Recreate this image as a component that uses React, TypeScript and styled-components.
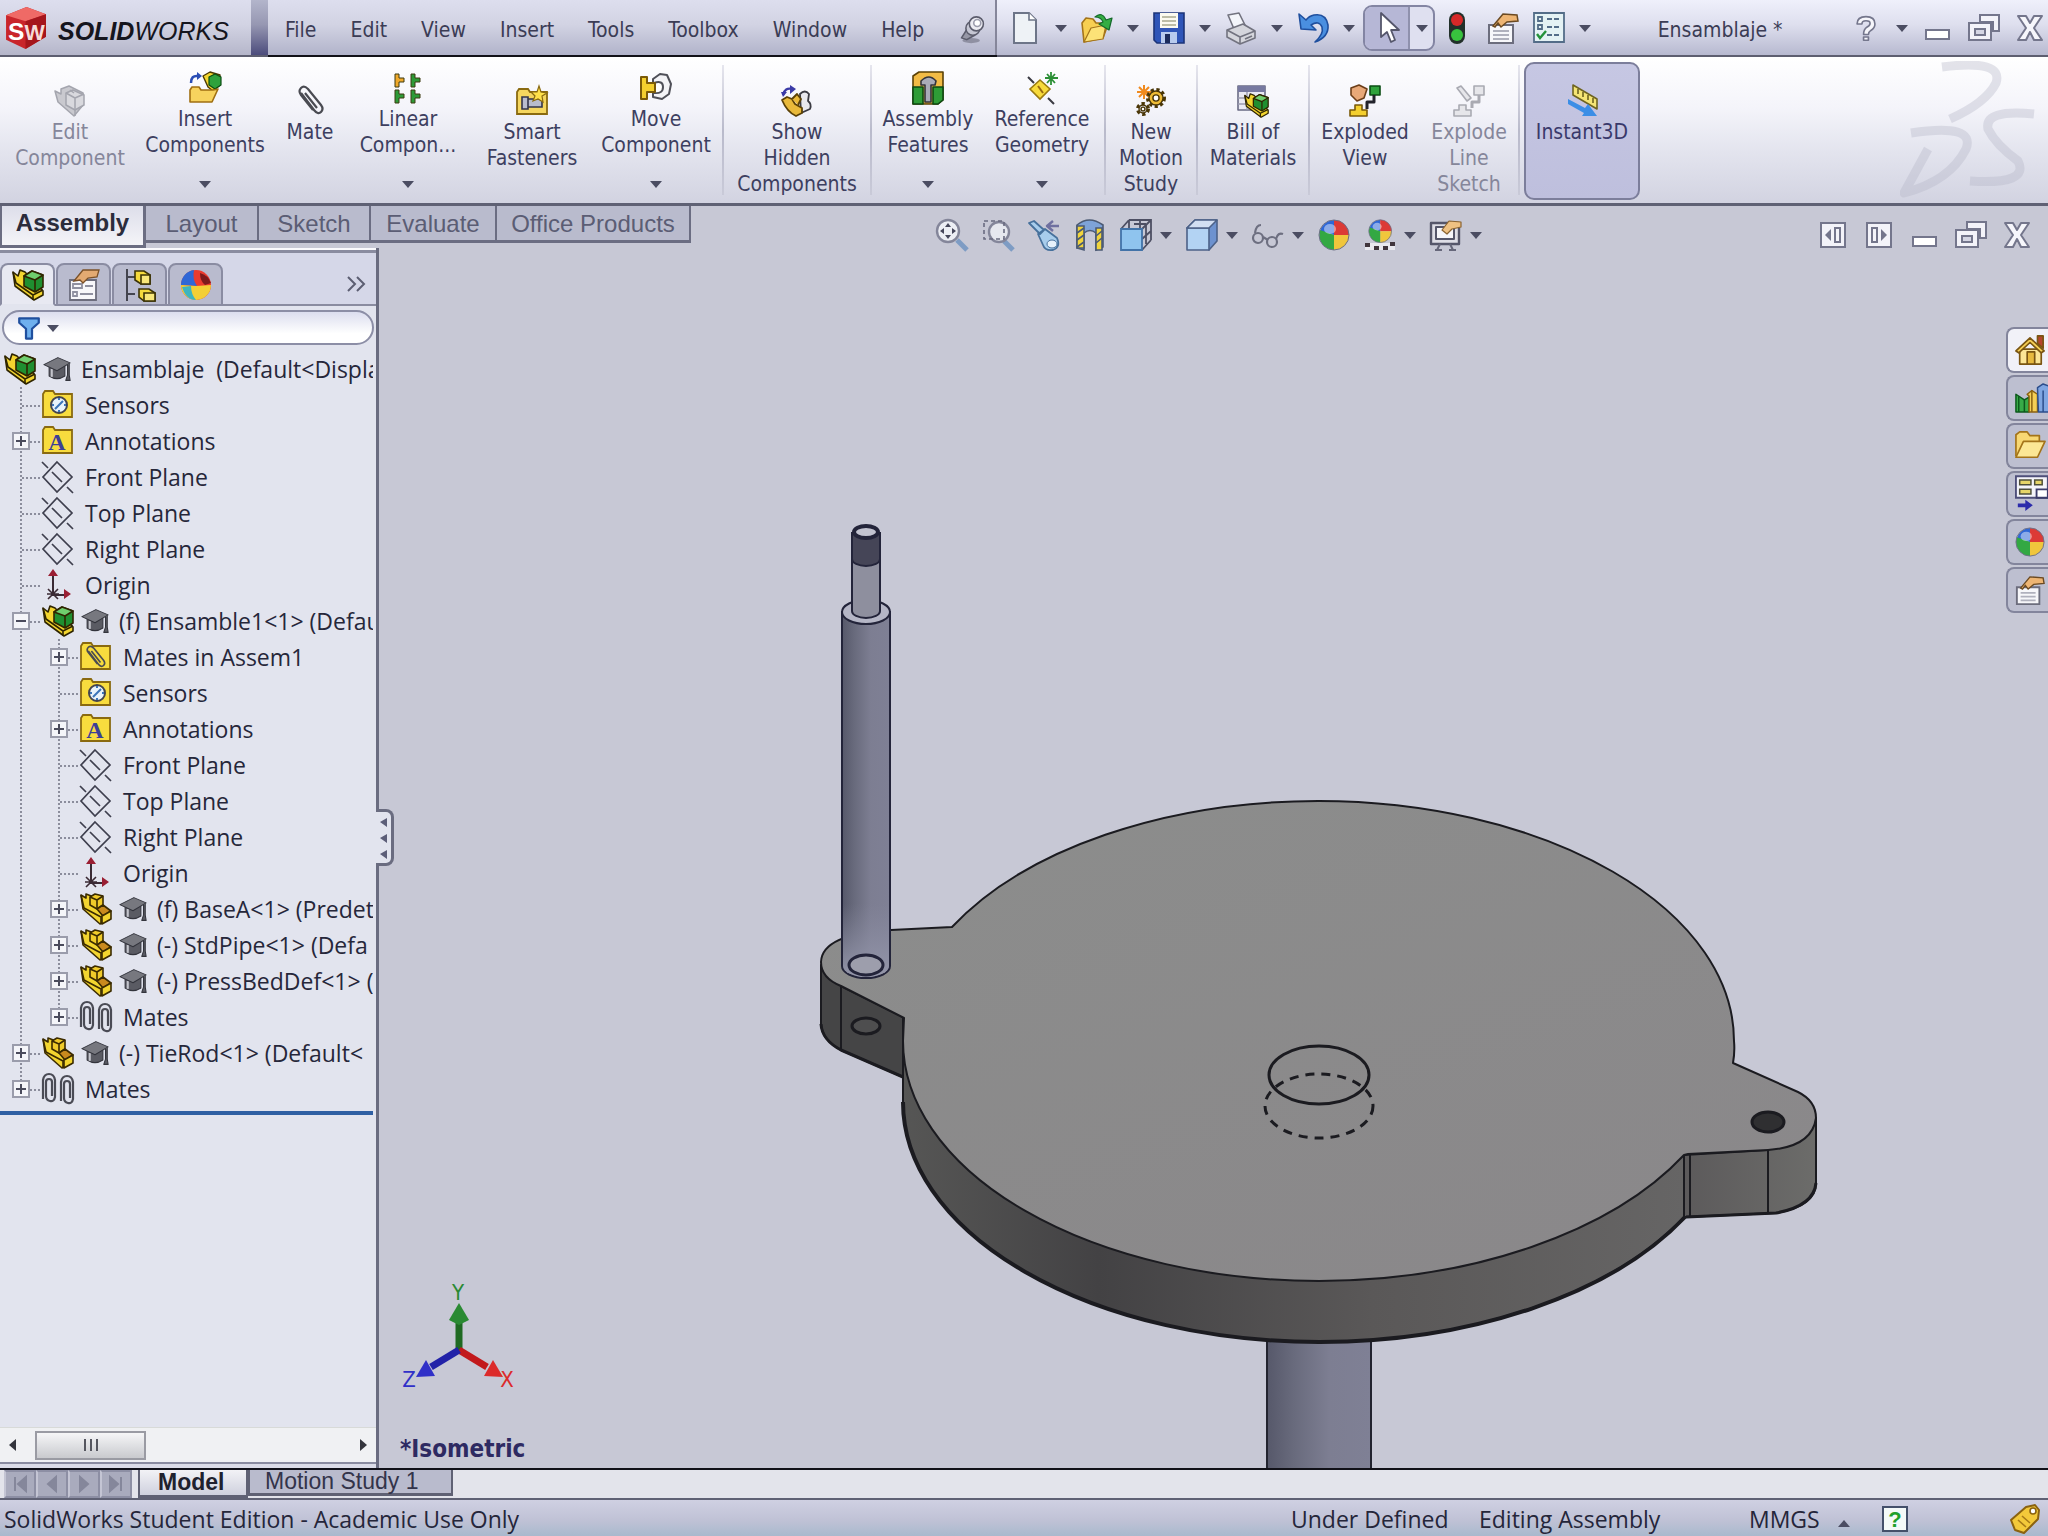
import React from "react";
import styled, { createGlobalStyle, css } from "styled-components";

const UI_FONT = '"DejaVu Sans Condensed", "DejaVu Sans", sans-serif';
const TREE_FONT = '"Open Sans", "Noto Sans", sans-serif';
const TAB_FONT = '"Liberation Sans", Arial, sans-serif';

const GlobalStyle = createGlobalStyle`
  * { box-sizing: border-box; }
  body { margin: 0; background: #c7c8d5; }
  button, input { font: inherit; color: inherit; }
`;

/* ---------- shell ---------- */

const Shell = styled.div`
  display: flex;
  flex-direction: column;
  height: 100vh;
  overflow: hidden;
  background: #c7c8d5;
  color: #3b3c55;
  font-family: ${UI_FONT};
  font-size: 21px;
`;

const plain = css`
  display: flex;
  align-items: center;
  padding: 0;
  border: 0;
  background: none;
`;

const IconButton = styled.button`
  ${plain}
  justify-content: center;
  width: 33px;
  height: 33px;
  flex: none;
`;

const Caret = styled.svg`
  width: 12px;
  height: 8px;
  flex: none;
  fill: #4b4d62;
`;

const Art = styled.svg<{ $size?: number }>`
  width: ${(p) => p.$size ?? 32}px;
  height: ${(p) => p.$size ?? 32}px;
  flex: none;
  display: block;
  overflow: visible;
`;

const HandleArt = styled.svg`
  width: 14px;
  height: 51px;
  display: block;
`;

const Down = () => (
  <Caret viewBox="0 0 12 8" aria-hidden="true">
    <path d="M0 1h12L6 8z" />
  </Caret>
);

/* ---------- title bar ---------- */

const TitleBar = styled.header`
  display: flex;
  flex: none;
  height: 57px;
  border-bottom: 2px solid #5d5e70;
  background: linear-gradient(#eff0fb, #dedfee 45%, #b7b9d0);
`;

const Brand = styled.div`
  display: flex;
  align-items: center;
  gap: 11px;
  width: 251px;
  padding-left: 4px;
  background: linear-gradient(#dddeee, #d2d3e3 45%, #b5b6ca);
`;

const BrandName = styled.span`
  padding-top: 6px;
  color: #15151d;
  font: italic 400 25px/30px ${TAB_FONT};
  b { font-weight: 700; }
`;

const BrandEdge = styled.div`
  width: 17px;
  background: linear-gradient(#b3b5cb, #9697b2 45%, #4c4c7c);
`;

const MenuBar = styled.nav`
  display: flex;
  align-items: center;
  gap: 34px;
  padding: 4px 9px 0 17px;
  border-right: 2px solid #85869a;
  background: linear-gradient(#dddeee, #d2d3e3 45%, #b1b3ca);
  box-shadow: 0 2px 0 #111118;
`;

const MenuItem = styled.button`
  ${plain}
  line-height: 26px;
`;

const QuickBar = styled.div`
  display: flex;
  flex: 1;
  align-items: center;
  gap: 13px;
  padding: 0 2px 0 11px;
`;

const Split = styled.div`
  display: flex;
  align-items: center;
  gap: 14px;
`;

const CaretButton = styled.button`
  ${plain}
  width: 12px;
  height: 24px;
`;

const SelectTool = styled.div`
  display: flex;
  width: 72px;
  height: 46px;
  margin-left: -5px;
  margin-right: -8px;
  border: 2px solid #8385a3;
  border-radius: 9px;
  overflow: hidden;
  background: #dfe0f0;
`;

const SelectMain = styled.button`
  ${plain}
  justify-content: center;
  width: 45px;
  border-right: 2px solid #8f91ad;
  background: #b6b7d6;
`;

const SelectMore = styled.button`
  ${plain}
  justify-content: center;
  flex: 1;
`;

const DocName = styled.span`
  flex: 1;
  text-align: center;
  line-height: 26px;
  padding-top: 4px;
`;

/* ---------- ribbon ---------- */

const Ribbon = styled.section`
  display: flex;
  flex: none;
  height: 149px;
  border-bottom: 3px solid #5f6174;
  background: linear-gradient(#ffffff, #f4f4fa 35%, #e3e4ee 65%, #d2d3e1);
`;

const Command = styled.button<{ $w: number; $drop?: boolean; $off?: boolean; $on?: boolean }>`
  display: flex;
  flex-direction: column;
  align-items: center;
  flex: none;
  width: ${(p) => p.$w}px;
  padding: ${(p) => (p.$on ? "21px 0 0" : p.$drop ? "15px 0 0" : "28px 0 0")};
  margin: ${(p) => (p.$on ? "5px 0 3px 4px" : "0")};
  border: ${(p) => (p.$on ? "2px solid #7c7e9b" : "0")};
  border-radius: ${(p) => (p.$on ? "10px" : "0")};
  background: ${(p) => (p.$on ? "linear-gradient(#c6c7e3, #bebfdd)" : "none")};
  color: ${(p) => (p.$off ? "#85869a" : p.$on ? "#39396b" : "#3d3f60")};
  line-height: 26px;
  white-space: pre-line;
`;

const CommandText = styled.span`
  margin-top: 2px;
  line-height: 26px;
`;

const CommandCaret = styled.span`
  display: flex;
  margin-top: 22px;
`;

const Divider = styled.div<{ $gap?: number }>`
  flex: none;
  width: 2px;
  margin: 8px 0 8px ${(p) => p.$gap ?? 0}px;
  background: linear-gradient(#e6e6ee, #b9bacb 50%, #c9cad8);
`;

const Watermark = styled.svg`
  width: 140px;
  height: 140px;
  margin: 4px 8px 0 auto;
  fill: none;
  stroke: #b4b5c6;
  stroke-width: 9;
  stroke-linejoin: round;
  opacity: 0.36;
`;

/* ---------- command tabs / view toolbar ---------- */

const ToolRow = styled.div`
  display: flex;
  align-items: flex-start;
  flex: none;
  height: 42px;
`;

const TabStrip = styled.div`
  display: flex;
  align-items: flex-start;
  width: 691px;
  font-family: ${TAB_FONT};
  font-size: 24px;
`;

const CommandTab = styled.button<{ $w: number; $active?: boolean }>`
  flex: none;
  width: ${(p) => p.$w}px;
  height: ${(p) => (p.$active ? 42 : 37)}px;
  padding: ${(p) => (p.$active ? "0 0 5px" : "2px 0 0")};
  border: solid #6b6d82;
  border-width: ${(p) => (p.$active ? "0 3px 3px 2px" : "0 2px 3px 0")};
  background: ${(p) => (p.$active ? "linear-gradient(#dddeea, #f4f4f8)" : "#b9bbcd")};
  color: ${(p) => (p.$active ? "#2b2c3c" : "#5b5d74")};
  font-weight: ${(p) => (p.$active ? 700 : 400)};
  line-height: 32px;
`;

const ViewTools = styled.div`
  display: flex;
  gap: 13px;
  margin: 12px auto 0 244px;
`;

const ViewTool = styled.div`
  display: flex;
  align-items: center;
  gap: 8px;
`;

const DocControls = styled.div`
  display: flex;
  gap: 13px;
  margin: 12px 15px 0 0;
`;

/* ---------- body ---------- */

const Body = styled.main`
  display: flex;
  flex: 1;
  min-height: 0;
`;

const Panel = styled.aside`
  display: flex;
  flex-direction: column;
  flex: none;
  width: 379px;
  border-right: 3px solid #6a6c80;
  background: #e2e4ee;
  font-family: ${TREE_FONT};
`;

const PanelTabs = styled.div`
  display: flex;
  align-items: flex-end;
  flex: none;
  height: 58px;
  padding: 0 10px 0 0;
  border-top: 2px solid #fafafd;
  box-shadow: inset 0 3px 0 #8a8ca0, inset 0 -2px 0 #8a8ca0;
  background: #d5d7e8;
`;

const PanelTab = styled.button<{ $active?: boolean }>`
  ${plain}
  justify-content: center;
  width: 55px;
  height: 43px;
  margin-right: 1px;
  border: 2px solid #8a8ca2;
  border-bottom-color: ${(p) => (p.$active ? "#e2e4ee" : "#8a8ca2")};
  border-radius: 8px 8px 0 0;
  background: ${(p) => (p.$active ? "#e8e9f2" : "#b9bbce")};
`;

const MoreButton = styled.button`
  ${plain}
  margin: 0 0 12px auto;
`;

const FilterBox = styled.div`
  display: flex;
  align-items: center;
  gap: 6px;
  flex: none;
  height: 35px;
  margin: 4px 2px 6px 2px;
  padding-left: 13px;
  border: 2px solid #8c8ea6;
  border-radius: 18px;
  background: linear-gradient(#dcdeef, #ffffff 70%);
`;

const FilterInput = styled.input`
  flex: 1;
  min-width: 0;
  border: 0;
  outline: 0;
  background: none;
`;

const Tree = styled.ul`
  flex: none;
  width: 373px;
  margin: 0;
  padding: 0 0 4px;
  overflow: hidden;
  list-style: none;
  border-bottom: 4px solid #2f5fa3;
  color: #26273a;
  font-size: 23px;
  line-height: 36px;
`;

const TreeRow = styled.li<{ $root?: boolean }>`
  display: flex;
  align-items: center;
  height: 36px;
  padding-left: ${(p) => (p.$root ? 4 : 0)}px;
  white-space: pre;
`;

const dotsV = "repeating-linear-gradient(#8b8d9c 0 2px, transparent 2px 4px)";
const dotsH = "repeating-linear-gradient(90deg, #8b8d9c 0 2px, transparent 2px 4px)";

const Guide = styled.span<{ $leaf?: boolean; $end?: boolean }>`
  display: flex;
  align-items: center;
  flex: none;
  width: ${(p) => (p.$leaf ? 42 : 38)}px;
  height: 36px;
  padding-left: 12px;
  background-image: ${(p) => (p.$leaf ? `${dotsV}, ${dotsH}` : dotsV)};
  background-repeat: no-repeat;
  background-position: 20px 0, 22px 18px;
  background-size: 2px ${(p) => (p.$end ? "50%" : "100%")}, 20px 2px;
`;

const Expander = styled.button`
  ${plain}
  width: 18px;
  height: 18px;
`;

const CapSlot = styled.span`
  display: flex;
  margin-left: 7px;
`;

const TreeLabel = styled.span<{ $cap?: boolean }>`
  margin-left: ${(p) => (p.$cap ? 10 : 11)}px;
  flex: none;
`;

const HScroll = styled.div`
  display: flex;
  align-items: center;
  flex: none;
  height: 35px;
  margin-top: auto;
  padding: 0 6px;
  border-top: 1px solid #d8dad8;
  background: #f0f1f3;
`;

const ScrollTrack = styled.div`
  flex: 1;
  padding-left: 17px;
`;

const ScrollThumb = styled.div`
  display: flex;
  align-items: center;
  justify-content: center;
  gap: 4px;
  width: 111px;
  height: 29px;
  border: 2px solid #9a9ba3;
  background: linear-gradient(#f6f6f7, #dfe0e3 50%, #c9cace);
  i { width: 2px; height: 12px; background: #55565f; }
`;

const PanelFoot = styled.div`
  flex: none;
  height: 6px;
  border-top: 2px solid #8a8ca0;
  background: #dcdde8;
`;

const Viewport = styled.section`
  position: relative;
  flex: 1;
  min-width: 0;
`;

const Scene = styled.svg`
  display: block;
  width: 100%;
  height: 100%;
`;

const SplitHandle = styled.button`
  position: absolute;
  left: -3px;
  top: calc(50% - 49px);
  width: 18px;
  height: 57px;
  padding: 0;
  border: 3px solid #6a6c80;
  border-left: 0;
  border-radius: 0 8px 8px 0;
  background: #e2e4ee;
`;

const TaskPane = styled.div`
  position: absolute;
  right: 0;
  top: 79px;
  display: flex;
  flex-direction: column;
  gap: 2px;
`;

const TaskTab = styled.button<{ $active?: boolean }>`
  ${plain}
  justify-content: flex-start;
  width: 42px;
  height: 46px;
  padding-left: 7px;
  overflow: hidden;
  border: 2px solid #83859c;
  border-right: 0;
  border-radius: 8px 0 0 8px;
  background: ${(p) => (p.$active ? "#f1f1f8" : "#bdbfd0")};
`;

/* ---------- bottom ---------- */

const SheetBar = styled.nav`
  display: flex;
  align-items: flex-start;
  flex: none;
  height: 32px;
  border-top: 2px solid #111118;
  border-bottom: 2px solid #5f6174;
  background: #e3e4eb;
  font-family: ${TAB_FONT};
  font-size: 23px;
`;

const SheetNav = styled.div`
  display: flex;
  width: 138px;
  padding-left: 4px;
`;

const NavButton = styled.button`
  ${plain}
  justify-content: center;
  width: 32px;
  height: 28px;
  border: 2px solid #8d8fa4;
  border-left-color: #c4c5d4;
  background: #a9abbd;
`;

const Sheet = styled.button<{ $w: number; $active?: boolean }>`
  width: ${(p) => p.$w}px;
  height: ${(p) => (p.$active ? 28 : 26)}px;
  padding: 0 0 0 ${(p) => (p.$active ? 18 : 15)}px;
  border: solid #5f6174;
  border-width: 0 2px 3px;
  background: ${(p) => (p.$active ? "linear-gradient(#f2f2f6, #cfd1de)" : "#b9bbcd")};
  color: ${(p) => (p.$active ? "#20212e" : "#33344a")};
  font-weight: ${(p) => (p.$active ? 700 : 400)};
  line-height: 23px;
  text-align: left;
`;

const StatusBar = styled.footer`
  display: flex;
  align-items: center;
  flex: none;
  height: 36px;
  padding: 2px 8px 0 4px;
  background: linear-gradient(#cfd0e2, #c0c2d6 55%, #a9b9cd);
  color: #25263a;
  font-family: ${TREE_FONT};
  font-size: 23px;
  line-height: 28px;
`;

const StatusCell = styled.span<{ $w?: number; $grow?: boolean }>`
  flex: ${(p) => (p.$grow ? "1" : "none")};
  width: ${(p) => (p.$w ? `${p.$w}px` : "auto")};
  white-space: nowrap;
`;

/* ---------- icon drawings ---------- */

const Ball = () => (
  <g>
    <path d="M16 16V1A15 15 0 0 0 2 12z" fill="#2f67d6" />
    <path d="M16 16V1a15 15 0 0 1 15 15z" fill="#dc3a35" />
    <path d="M16 16h15a15 15 0 0 1-15 15z" fill="#f0c63c" />
    <path d="M16 16v15A15 15 0 0 1 2 11z" fill="#33a843" />
    <ellipse cx="12" cy="10" rx="6" ry="5" fill="#fff" opacity=".45" />
    <circle cx="16" cy="16" r="15" fill="none" stroke="#6c6f86" strokeWidth="1" />
  </g>
);
const Sheetlet = () => (
  <g>
    <path d="M2 13h24v18H2z" fill="#f7f7fa" stroke="#6c6d7d" strokeWidth="2" />
    <path d="M6 19h16M6 23h16M6 27h16" stroke="#b0b1bd" strokeWidth="2" />
    <path d="M6 14L16 2l14 1 1 6-11 1-6 5-3-4-3 4z" fill="#eeb573" stroke="#6b4a22" strokeWidth="1.5" />
  </g>
);
const Clip = () => (
  <path d="M7 8l13 17q4 5 7 2t0-7L14 4Q10 0 7 3t0 7l12 15M11 8l12 15" fill="none" stroke="#4a4b52" strokeWidth="2.2" />
);
const PartShape = () => (
  <g stroke="#3b2b00" strokeWidth="1.6" strokeLinejoin="round">
    <path d="M1 2l5 3V1l8 3 16 16v6l-10 5L3 16z" fill="#f3d52f" />
    <path d="M1 2l3 13 17 9 9-4M21 24v7" fill="none" />
    <path d="M10 4l5-3 8 2v9l-6 4-7-4z" fill="#f0cb2a" />
    <path d="M10 4l7 3 6-4M17 7v9" fill="none" />
    <path d="M17 16l6-4 8 6-8 5z" fill="#c98a1e" />
    <path d="M22 23l9-5v8l-9 5z" fill="#f3d52f" />
  </g>
);
const AsmShape = () => (
  <g stroke="#2f2500" strokeWidth="1.6" strokeLinejoin="round">
    <path d="M1 3l5 4 2-6 5 2 18 19v4l-9 5L3 17z" fill="#f3d52f" />
    <path d="M1 3l3 11 17 12 10-5M21 26v5" fill="none" />
    <path d="M12 7l8-5 11 4v12l-8 5-11-6z" fill="#1f8f30" />
    <path d="M12 7l8-5 11 4-8 5z" fill="#6fce6d" />
    <path d="M23 11v12" fill="none" />
  </g>
);
const FolderShape = () => (
  <path d="M1 5l2-3h8l2 3h17v23H1z" fill="#f8dc3e" stroke="#8a6a10" strokeWidth="1.8" />
);
const GearShape = ({ x, y, r, fill }: { x: number; y: number; r: number; fill: string }) => (
  <g>
    <circle cx={x} cy={y} r={r} fill="none" stroke="#4a3607" strokeWidth="4" strokeDasharray="3 2.4" />
    <circle cx={x} cy={y} r={r - 1} fill={fill} stroke="#4a3607" strokeWidth="1.4" />
    <circle cx={x} cy={y} r={r / 2.6} fill="#fff" stroke="#4a3607" strokeWidth="1.4" />
  </g>
);
const Tee = ({ x, y, c }: { x: number; y: number; c: string }) => (
  <path transform={`translate(${x} ${y})`} d="M0 0h4v4h5v4H4v5H0z" fill={c} stroke="#3c3a10" strokeWidth="1" />
);

const icons: Record<string, React.ReactNode> = {
  editComponent: (
    <g fill="#c9c9cf" stroke="#a4a5ae" strokeWidth="1.5" strokeLinejoin="round">
      <path d="M1 6l6 3 0-5 8-3 14 7v12l-9 11L4 17z" />
      <path d="M12 8l7-3 11 5v10l-9 5-9-5z" fill="#d9d9de" />
      <path d="M12 8l9 5 9-4M21 13v18M16 5l4 3" fill="none" />
    </g>
  ),
  insert: (
    <g strokeLinejoin="round">
      <path d="M2 11Q2 3 9 4" fill="none" stroke="#2a4db5" strokeWidth="2.5" /><path d="M8 0l5 4-5 4z" fill="#2a4db5" />
      <path d="M14 4l7-4 10 3v10l-7 6-5-4z" fill="#f3d52f" stroke="#4a3900" strokeWidth="1.4" />
      <path d="M20 5l6-3 6 3v8l-6 4-6-4z" fill="#2fa23c" stroke="#0b4d13" strokeWidth="1.2" />
      <path d="M1 18l2-3h7l2 3h12l5-1-6 13H1z" fill="#f7d35e" stroke="#a06f12" strokeWidth="1.6" />
    </g>
  ),
  clip: <Clip />,
  linear: <g><Tee x={3} y={2} c="#f0a92a" /><Tee x={19} y={2} c="#2d9a37" /><Tee x={3} y={18} c="#2d9a37" /><Tee x={19} y={18} c="#2d9a37" /></g>,
  smart: (
    <g>
      <path d="M1 7l2-3h9l2 3h17v22H1z" fill="#f5d65f" stroke="#8a6a10" strokeWidth="1.8" />
      <path d="M6 12h6v12H6zM12 14h14v8H12z" fill="#b9bccd" stroke="#33344a" strokeWidth="1.6" />
      <path d="M23 1l2 6 6 1-5 3 1 6-5-3-5 2 2-5-4-4h6z" fill="#ffe14a" stroke="#8a6a10" strokeWidth="1.2" />
    </g>
  ),
  move: (
    <g strokeWidth="2" strokeLinejoin="round">
      <path d="M13 7l7-5 7 1 4 9-2 10-7 5-9-2z" fill="#f3f3f6" stroke="#4f5058" />
      <path d="M14 11q9-3 9 4t-9 6" fill="#fff" stroke="#4f5058" />
      <path d="M1 5h6v6h8v9H7v7H1z" fill="#f4cf2e" stroke="#7a5a08" />
    </g>
  ),
  showHidden: (
    <g strokeWidth="1.8" strokeLinejoin="round">
      <path d="M2 10q2-8 9-6" fill="none" stroke="#3a3aa6" strokeWidth="2.4" /><path d="M9 0l6 4-6 5zM0 7h6l-4 5z" fill="#3a3aa6" />
      <path d="M19 9q5-5 9 0l-1 7q4 3 2 8l-9 4z" fill="#e8e8ee" stroke="#3a3a42" />
      <path d="M1 15l5-3 5 2 3 5 7 4v5l-6 3q-9-4-14-16z" fill="#e9b93a" stroke="#5b4106" />
      <path d="M11 14l5-5 4 5-3 6" fill="#e9b93a" stroke="#5b4106" />
    </g>
  ),
  features: (
    <g strokeWidth="1.6" strokeLinejoin="round">
      <path d="M1 4l6-4h24v28l-5 4H1z" fill="#f2bb45" stroke="#5b4106" />
      <path d="M1 15h10v17H1zM21 15h10v13l-5 4h-5z" fill="#2e9c36" stroke="#0c4a14" />
      <path d="M9 9q8-8 15 0l-1 4h-4v17h-6V13H9z" fill="#a9abb8" stroke="#33343c" />
    </g>
  ),
  refgeo: (
    <g>
      <path d="M2 5l6 6M22 26l6 6" stroke="#3a3a42" strokeWidth="2" />
      <path d="M14 8l10 9-10 10L4 17z" fill="#f8da3a" stroke="#9a7a10" strokeWidth="1.6" /><path d="M12 14l5 7" stroke="#9a6a10" strokeWidth="2" />
      <path d="M25 0v13M19 6h13M21 2l8 9M29 2l-8 9" stroke="#2c8f35" strokeWidth="1.8" />
    </g>
  ),
  motion: (
    <g>
      <path d="M9 0v14M2 7h14M4 2l10 10M14 2L4 12" stroke="#f08a1e" strokeWidth="2" />
      <GearShape x={21} y={13} r={8} fill="#eebb35" /><GearShape x={8} y={24} r={5} fill="#d5d5dc" />
    </g>
  ),
  bom: (
    <g strokeLinejoin="round">
      <path d="M1 1h27v24H1z" fill="#e9e9f2" stroke="#6a6b84" strokeWidth="1.6" /><path d="M1 1h27v6H1z" fill="#7779a0" />
      <path d="M1 13h27M1 19h27M10 7v18" stroke="#9a9bb0" strokeWidth="1.4" />
      <g transform="translate(7 8) scale(.78)"><AsmShape /></g>
    </g>
  ),
  exploded: (
    <g strokeWidth="1.6" strokeLinejoin="round">
      <path d="M2 3l8-3 8 4-3 9-7 3-6-6z" fill="#e8a878" stroke="#6b3d18" />
      <path d="M21 1h10v9H21z" fill="#2fa23c" stroke="#0b4d13" />
      <path d="M25 10v7h-7v7" fill="none" stroke="#22232b" strokeWidth="3" />
      <path d="M6 20h7v5h5v6H1v-6h5z" fill="#f4cf2e" stroke="#7a5a08" />
    </g>
  ),
  explodeLine: (
    <g strokeWidth="1.6" strokeLinejoin="round" fill="#e6e6ea" stroke="#a9aab2">
      <path d="M4 3l4-2 10 12-4 3zM21 1h10v9H21z" /><path d="M26 10v7h-7v6" fill="none" strokeWidth="3" />
      <path d="M6 20h7v5h5v6H1v-6h5z" />
    </g>
  ),
  instant: (
    <g strokeLinejoin="round">
      <path d="M7 0l24 14v10L7 10z" fill="#f5e574" stroke="#6e6420" strokeWidth="1.6" />
      <path d="M12 4v5M17 7v5M22 10v5M27 13v5" stroke="#6e6420" strokeWidth="1.6" />
      <path d="M2 14l17 9 3-4 9 12-15 0 2-3L2 19z" fill="#3b8ee6" />
    </g>
  ),
  pin: (
    <g stroke="#5b5c6c" strokeWidth="1.8" fill="#ececf2" strokeLinejoin="round">
      <ellipse cx="15" cy="28" rx="10" ry="3" fill="#8f90a2" stroke="none" />
      <path d="M4 25l7-11 8 8-9 5z" fill="#9697a6" /><circle cx="17" cy="14" r="8" fill="#c5c6d3" /><circle cx="21" cy="9" r="8" />
      <circle cx="22" cy="8" r="4" fill="#fff" stroke="#9b9cac" />
    </g>
  ),
  newDoc: <g><path d="M5 1h15l7 7v23H5z" fill="#eef2f6" stroke="#6d7588" strokeWidth="2" /><path d="M20 1v7h7" fill="#fff" stroke="#6d7588" strokeWidth="1.6" /></g>,
  open: (
    <g strokeLinejoin="round">
      <path d="M3 30L1 11l4-5 7 1 3 4 9 0 2 4-4 11z" fill="#f7cf52" stroke="#a4741a" strokeWidth="1.6" />
      <path d="M3 30l7-14 15-3-3 14z" fill="#fce277" stroke="#a4741a" strokeWidth="1.2" />
      <path d="M14 5q7-6 11 3l6-2-3 12-10-6 4-2q-2-5-8-5z" fill="#35ad43" stroke="#14692a" strokeWidth="1.2" />
    </g>
  ),
  save: (
    <g>
      <path d="M1 1h30v30H4l-3-3z" fill="#2f55b8" stroke="#1c3478" strokeWidth="1.6" /><path d="M7 1h18v15H7z" fill="#fbfaf0" />
      <path d="M9 5h14M9 9h14M9 13h14" stroke="#a9a98f" strokeWidth="1.6" /><path d="M8 20h16v11H8z" fill="#b8cbee" /><path d="M12 22h5v9h-5z" fill="#1c2c5c" />
    </g>
  ),
  print: (
    <g stroke="#72737f" strokeWidth="1.6" strokeLinejoin="round">
      <path d="M3 3l11-2 6 12-11 4z" fill="#f3f5fa" /><path d="M2 18l16-6 12 7v7l-15 6-13-7z" fill="#d5d6dc" />
      <path d="M2 18l13 7 15-6M15 25v7M20 27l7-3" fill="none" />
    </g>
  ),
  undo: <path d="M2 2l2 15 15 1-5-5q8-5 11 2 2 7-7 15 14-5 13-17Q29 1 17 3q-5 1-8 5z" fill="#4a8fe0" stroke="#1f4f9e" strokeWidth="1.6" strokeLinejoin="round" />,
  arrow: <path d="M10 1v24l6-5 4 10 4-2-4-10h8z" fill="#fff" stroke="#55566b" strokeWidth="1.8" strokeLinejoin="round" />,
  traffic: (
    <g>
      <rect x="8" y="0" width="16" height="32" rx="8" fill="#22302a" />
      <circle cx="16" cy="8" r="6" fill="#d62828" /><circle cx="16" cy="23" r="6" fill="#38c23e" />
    </g>
  ),
  sheet: <Sheetlet />,
  options: (
    <g stroke="#536d88" strokeWidth="1.8" fill="none">
      <path d="M1 1h30v29H1z" fill="#e4f2f4" /><path d="M14 7h13M14 15h13M14 23h13" strokeDasharray="5 2" />
      <path d="M5 5h4v4H5zM5 13h4v4H5z" /><path d="M4 22l3 4 6-7" stroke="#23923a" strokeWidth="2.4" />
    </g>
  ),
  help: (
    <g fill="#f6f6fb" stroke="#74768c" strokeWidth="2" strokeLinejoin="round">
      <path d="M5 11Q5 2 16 2t11 9q0 5-5 8-3 2-3 5h-6q0-6 4-9 4-2 4-5 0-3-5-3t-5 4z" />
      <path d="M13 27h6v4h-6z" />
    </g>
  ),
  minimize: <path d="M4 18h23v9H4z" fill="#fff" stroke="#74768c" strokeWidth="2" />,
  restore: (
    <g fill="#f3f3f9" stroke="#74768c" strokeWidth="2">
      <path d="M12 3h19v16h-6v-9H12z" /><path d="M1 11h22v17H1z" /><path d="M7 17h10v6H7z" fill="#d5d6e4" />
    </g>
  ),
  close: <path d="M4 4h8l4 7 4-7h8l-8 12 8 12h-8l-4-8-4 8H4l8-12z" fill="#f6f6fb" stroke="#74768c" strokeWidth="2" strokeLinejoin="round" />,
  paneLeft: <g fill="#f3f3f9" stroke="#74768c" strokeWidth="2"><path d="M4 4h24v24H4z" /><path d="M18 9h5v14h-5z" /><path d="M14 10v12l-6-6z" fill="#74768c" stroke="none" /></g>,
  paneRight: <g fill="#f3f3f9" stroke="#74768c" strokeWidth="2"><path d="M4 4h24v24H4z" /><path d="M9 9h5v14H9z" /><path d="M18 10v12l6-6z" fill="#74768c" stroke="none" /></g>,
  zoomFit: (
    <g>
      <path d="M21 21l10 10" stroke="#7e9cc4" strokeWidth="5" /><circle cx="12" cy="12" r="11" fill="#eceef4" stroke="#84869a" strokeWidth="2.4" />
      <path d="M12 4l3 4H9zM12 20l3-4H9zM4 12l4-3v6zM20 12l-4-3v6z" fill="#45465a" />
    </g>
  ),
  zoomArea: (
    <g>
      <path d="M22 22l9 9" stroke="#7e9cc4" strokeWidth="5" /><circle cx="17" cy="13" r="10" fill="#e6e8ef" stroke="#84869a" strokeWidth="2.4" />
      <path d="M2 2h20v18H2z" fill="none" stroke="#696b80" strokeWidth="1.6" strokeDasharray="4 3" />
    </g>
  ),
  prevView: (
    <g strokeLinejoin="round">
      <path d="M1 4l5-2 10 9-4 4zM10 15l7-5 12 9q4 9-4 12-8 1-10-5z" fill="#a8cdec" stroke="#47719c" strokeWidth="1.8" />
      <ellipse cx="24" cy="25" rx="5" ry="4" fill="#e5f1fb" stroke="#47719c" /><path d="M31 7H20M25 2l-6 5 6 5" fill="none" stroke="#6f70a0" strokeWidth="2.4" />
    </g>
  ),
  section: (
    <g stroke="#4b5a74" strokeWidth="1.6">
      <path d="M3 6q12-10 26 0v22l-7 3V14q-6-5-12 0v17l-7-2z" fill="#7ea3d8" /><path d="M3 7h7v22H3zM22 9h6v22h-6z" fill="#f1d43b" />
      <path d="M3 14l7-5M3 21l7-5M3 28l7-5M22 17l6-5M22 24l6-5" />
    </g>
  ),
  viewCube: (
    <g stroke="#4d4f63" strokeWidth="1.8" fill="none">
      <path d="M9 1h22v20M1 10L9 1M22 10l9-9M22 31l9-10M9 1v9M20 1v9M14 5h12M26 5v20M31 12l-9 8" /><path d="M1 10h21v21H1z" fill="#8fc4ee" stroke="#4273a8" />
    </g>
  ),
  display: (
    <g stroke="#4d6288" strokeWidth="1.6" strokeLinejoin="round">
      <path d="M1 9L9 1h22v21l-8 9z" fill="#6d92cf" /><path d="M1 9h22v22H1z" fill="#b3d3f3" /><path d="M1 9l8-8h22l-8 8z" fill="#d2dff2" />
    </g>
  ),
  glasses: <g fill="none" stroke="#6d6f80" strokeWidth="2.2"><circle cx="6" cy="19" r="5" /><circle cx="20" cy="23" r="5" /><path d="M11 18l5 3M3 14q1-8 6-8M24 20q2-7 7-5" /></g>,
  ball: <Ball />,
  scene: (
    <g>
      <path d="M1 24h30v7H1z" fill="#e9e9ef" /><path d="M1 24h5v4H1zM10 27h5v4h-5zM19 27h5v4h-5zM26 23h5v4h-5z" fill="#41363d" />
      <g transform="translate(4 0) scale(.76)"><Ball /></g>
    </g>
  ),
  viewSettings: (
    <g strokeLinejoin="round">
      <path d="M1 4h28v21H1z" fill="#dedee6" stroke="#55566a" strokeWidth="2.4" /><path d="M6 8h18v12H6z" fill="#f6f6fa" stroke="#55566a" strokeWidth="2" />
      <path d="M10 25l-3 6M20 25l3 6M5 31h7M19 31h7" stroke="#66677a" strokeWidth="2" />
      <path d="M12 11l7-9 12 1 0 5-9 2-5 5z" fill="#efc182" stroke="#8a6330" strokeWidth="1.2" />
    </g>
  ),
  asm: <AsmShape />,
  part: <PartShape />,
  props: (
    <g>
      <path d="M2 11h26v20H2z" fill="#f7f7fa" stroke="#6c6d7d" strokeWidth="1.8" /><path d="M5 15h9v4H5zM5 23h4v4H5zM12 25h13M17 17h8" stroke="#8f90a0" strokeWidth="1.8" fill="none" />
      <path d="M6 12L15 1l16 0-2 7-9 1-5 5-3-3z" fill="#e3aa72" stroke="#7b5128" strokeWidth="1.3" />
    </g>
  ),
  config: (
    <g stroke="#3b3306" strokeWidth="1.6">
      <path d="M3 0v32M3 8h8M3 25h8" stroke="#44454f" strokeWidth="2" fill="none" />
      <path d="M11 2h9l6 4v9h-9l-6-4zM15 20h10l6 4v8H20l-5-4z" fill="#f5da3c" /><path d="M17 6h9v9h-9zM20 24h11v8H20z" fill="#f8e779" />
    </g>
  ),
  appearance: (
    <g>
      <circle cx="16" cy="16" r="15" fill="#eb3b2f" /><path d="M1 16A15 15 0 0 1 14 1q-2 9 3 16z" fill="#2f67d6" />
      <path d="M1 16l15 1 15-1a15 15 0 0 1-30 0z" fill="#f3cf35" /><path d="M2 18l9-1q0 8 5 14-10 0-14-13z" fill="#3db4c0" /><path d="M20 4q8 2 11 10l-6 2q-5-4-5-12z" fill="#7d1a1c" />
    </g>
  ),
  funnel: <path d="M3 3h26v6l-9 8v13h-8V17L3 9z" fill="#6fb0ee" stroke="#1f4f9e" strokeWidth="3" strokeLinejoin="round" />,
  cap: (
    <g stroke="#33343c" strokeWidth="1.2" strokeLinejoin="round">
      <path d="M7 13v11q9 6 18 0V13z" fill="#5a5b63" /><path d="M10 16v9" stroke="#c4c5cc" strokeWidth="2.4" />
      <path d="M1 11L17 3l14 6-15 9z" fill="#77787f" /><path d="M28 11v12l-2 6h5l-1-6V10" fill="#5a5b63" />
    </g>
  ),
  sensors: <g><FolderShape /><circle cx="17" cy="16" r="8" fill="#e8f3fb" stroke="#44454f" strokeWidth="2" /><path d="M13 20l8-8M17 9v2M17 21v2M10 16h2M22 16h2" stroke="#3b74b8" strokeWidth="2" /></g>,
  annot: <g><FolderShape /><text x="15" y="25" textAnchor="middle" fontFamily="Liberation Serif" fontWeight="700" fontSize="24" fill="#3d3f96">A</text></g>,
  matesIn: <g><FolderShape /><g transform="translate(3 4) scale(.76)"><Clip /></g></g>,
  plane: <g fill="none" stroke="#3e3f4e" strokeWidth="1.7"><path d="M15 1l15 15-15 15L1 16z" /><path d="M0 1l6 6M10 11l10 10M25 26l6 6" /></g>,
  origin: (
    <g stroke="#3a2a34" strokeWidth="2"><path d="M11 6v20h14" fill="none" /><path d="M6 20l10 10M16 20L6 30M5 25h12" strokeWidth="1.6" />
      <path d="M11 0l5 7H6zM29 25l-7-5v10z" fill="#9a1f33" stroke="none" /></g>
  ),
  mates: (
    <g fill="none" stroke="#4a4b55" strokeWidth="2.2">
      <path d="M1 26V7q1-6 6-6t6 6v17q-1 5-5 4t-4-5V9q0-3 3-3t3 3v14" /><path d="M19 28V9q1-6 6-6t6 6v17q-1 5-5 4t-4-5V11q0-3 3-3t3 3v14" />
    </g>
  ),
  home: (
    <g stroke="#7a5512" strokeWidth="1.8" strokeLinejoin="round">
      <path d="M24 9V1h6v13z" fill="#b5452d" /><path d="M5 15h23v16H5z" fill="#fbe596" /><path d="M1 17L16 3l15 14-3 2L16 8 4 19z" fill="#f6cf54" /><path d="M13 18h8v13h-8z" fill="#e7b93f" />
    </g>
  ),
  library: (
    <g strokeWidth="1.6" strokeLinejoin="round">
      <path d="M1 12l9 6 5-3v16H1z" fill="#38ab48" stroke="#0c5a1c" /><path d="M10 18v13M4 14v17" stroke="#0c5a1c" />
      <path d="M13 12l5-4 6 4v19h-9V14z" fill="#f4cf56" stroke="#8a6210" /><path d="M18 8v23" stroke="#8a6210" />
      <path d="M24 5l6-4 8 3v27H25z" fill="#7fa6e2" stroke="#2c4e8c" /><path d="M30 8v23" stroke="#2c4e8c" />
    </g>
  ),
  folder: <g stroke="#a4741a" strokeWidth="1.8" strokeLinejoin="round"><path d="M1 27V4l4-3h8l3 4h10v6" fill="#f8d873" /><path d="M1 28l8-17h23l-8 17z" fill="#fce795" /></g>,
  palette: (
    <g>
      <path d="M1 -3h34v23H1z" fill="#f4f4fa" stroke="#4e4f7a" strokeWidth="2" /><path d="M5 1h12v5H5zM21 1h8v5h-8zM5 11h12v5H5z" fill="#e6d568" stroke="#4e4f3a" strokeWidth="1.6" />
      <path d="M23 11h12v9H23z" fill="#fff" stroke="#3b3c6b" strokeWidth="2" /><path d="M3 26h8v-4l8 6-8 6v-4H3z" fill="#2b2bab" />
    </g>
  ),
};

const Pic = ({ name, size }: { name: string; size?: number }) => (
  <Art viewBox="0 0 32 32" $size={size} aria-hidden="true">{icons[name]}</Art>
);

const LogoCube = () => (
  <Art viewBox="0 0 42 42" $size={43} aria-hidden="true">
    <path d="M2 9L22 1l19 7v22L21 42 2 33z" fill="#c9252b" />
    <path d="M2 9L22 1l19 7-20 7z" fill="#ef6a66" />
    <path d="M21 15l20-7v22L21 42z" fill="#a5161c" />
    <text x="4" y="33" fontFamily="Liberation Sans" fontWeight="700" fontSize="24" fill="#fff">S</text>
    <text x="20" y="33" fontFamily="Liberation Sans" fontWeight="700" fontSize="21" fill="#f6dcd8">W</text>
  </Art>
);

/* ---------- data ---------- */

const menus = ["File", "Edit", "View", "Insert", "Tools", "Toolbox", "Window", "Help"];

const quickTools = [
  ["newDoc", "New"], ["open", "Open"], ["save", "Save"], ["print", "Print"], ["undo", "Undo"],
];

type Cmd = { icon: string; text: string; w: number; drop?: boolean; off?: boolean; on?: boolean; rule?: number };
const commands: Cmd[] = [
  { icon: "editComponent", text: "Edit\nComponent", w: 140, off: true },
  { icon: "insert", text: "Insert\nComponents", w: 130, drop: true },
  { icon: "clip", text: "Mate", w: 80 },
  { icon: "linear", text: "Linear\nCompon...", w: 116, drop: true },
  { icon: "smart", text: "Smart\nFasteners", w: 132 },
  { icon: "move", text: "Move\nComponent", w: 116, drop: true, rule: 8 },
  { icon: "showHidden", text: "Show\nHidden\nComponents", w: 146, rule: 0 },
  { icon: "features", text: "Assembly\nFeatures", w: 112, drop: true },
  { icon: "refgeo", text: "Reference\nGeometry", w: 116, drop: true, rule: 4 },
  { icon: "motion", text: "New\nMotion\nStudy", w: 90, rule: 0 },
  { icon: "bom", text: "Bill of\nMaterials", w: 110, rule: 0 },
  { icon: "exploded", text: "Exploded\nView", w: 110 },
  { icon: "explodeLine", text: "Explode\nLine\nSketch", w: 98, off: true, rule: 0 },
  { icon: "instant", text: "Instant3D", w: 116, on: true },
];

const commandTabs: [string, number][] = [
  ["Assembly", 146], ["Layout", 113], ["Sketch", 112], ["Evaluate", 126], ["Office Products", 194],
];

const viewTools: [string, string, boolean][] = [
  ["zoomFit", "Zoom to Fit", false], ["zoomArea", "Zoom to Area", false], ["prevView", "Previous View", false],
  ["section", "Section View", false], ["viewCube", "View Orientation", true], ["display", "Display Style", true],
  ["glasses", "Hide/Show Items", true], ["ball", "Edit Appearance", false], ["scene", "Apply Scene", true],
  ["viewSettings", "View Settings", true],
];

const windowTools: [string, string][] = [["minimize", "Minimize"], ["restore", "Restore"], ["close", "Close"]];

type Node = { level: number; icon: string; text: string; box?: "+" | "-"; cap?: boolean; end?: boolean };
const nodes: Node[] = [
  { level: 0, icon: "asm", text: "Ensamblaje  (Default<Displa", cap: true },
  { level: 1, icon: "sensors", text: "Sensors" },
  { level: 1, icon: "annot", text: "Annotations", box: "+" },
  { level: 1, icon: "plane", text: "Front Plane" },
  { level: 1, icon: "plane", text: "Top Plane" },
  { level: 1, icon: "plane", text: "Right Plane" },
  { level: 1, icon: "origin", text: "Origin" },
  { level: 1, icon: "asm", text: "(f) Ensamble1<1> (Defau", box: "-", cap: true },
  { level: 2, icon: "matesIn", text: "Mates in Assem1", box: "+" },
  { level: 2, icon: "sensors", text: "Sensors" },
  { level: 2, icon: "annot", text: "Annotations", box: "+" },
  { level: 2, icon: "plane", text: "Front Plane" },
  { level: 2, icon: "plane", text: "Top Plane" },
  { level: 2, icon: "plane", text: "Right Plane" },
  { level: 2, icon: "origin", text: "Origin" },
  { level: 2, icon: "part", text: "(f) BaseA<1> (Predet", box: "+", cap: true },
  { level: 2, icon: "part", text: "(-) StdPipe<1> (Defa", box: "+", cap: true },
  { level: 2, icon: "part", text: "(-) PressBedDef<1> (", box: "+", cap: true },
  { level: 2, icon: "mates", text: "Mates", box: "+", end: true },
  { level: 1, icon: "part", text: "(-) TieRod<1> (Default<", box: "+", cap: true },
  { level: 1, icon: "mates", text: "Mates", box: "+", end: true },
];

/* ---------- parts ---------- */

const TreeItem = ({ node }: { node: Node }) => (
  <TreeRow $root={node.level === 0}>
    {node.level === 2 && <Guide />}
    {node.level > 0 && (
      <Guide $leaf $end={node.end}>
        {node.box && (
          <Expander aria-label={node.box === "+" ? "Expand" : "Collapse"}>
            <Art viewBox="0 0 18 18" $size={18}>
              <path d="M1 1h16v16H1z" fill="#f4f5f9" stroke="#9a9cab" strokeWidth="2" />
              <path d={node.box === "+" ? "M4 9h10M9 4v10" : "M4 9h10"} stroke="#4a4b5c" strokeWidth="2" />
            </Art>
          </Expander>
        )}
      </Guide>
    )}
    <Pic name={node.icon} />
    {node.cap && <CapSlot><Pic name="cap" size={28} /></CapSlot>}
    <TreeLabel $cap={node.cap}>{node.text}</TreeLabel>
  </TreeRow>
);

const Model = () => (
  <Scene viewBox="379 248 1669 1220" preserveAspectRatio="xMidYMid meet" role="img" aria-label="Isometric view of the assembly">
    <defs>
      <linearGradient id="pipe"><stop offset="0" stopColor="#56586a" /><stop offset=".25" stopColor="#686a7c" /><stop offset=".6" stopColor="#7d7e92" /><stop offset="1" stopColor="#7f8095" /></linearGradient>
      <linearGradient id="pipeFoot" x1="0" y1="0" x2="0" y2="1"><stop offset=".8" stopColor="#8d8fa4" stopOpacity="0" /><stop offset="1" stopColor="#9496aa" /></linearGradient>
      <linearGradient id="rim"><stop offset="0" stopColor="#565655" /><stop offset=".25" stopColor="#434244" /><stop offset=".6" stopColor="#5a5858" /><stop offset="1" stopColor="#666565" /></linearGradient>
      <linearGradient id="face" x1="0" y1="0" x2=".7" y2="1"><stop offset="0" stopColor="#8c8d8c" /><stop offset="1" stopColor="#8a888a" /></linearGradient>
      <linearGradient id="lug"><stop offset="0" stopColor="#5c5a5b" /><stop offset="1" stopColor="#6c6c6a" /></linearGradient>
    </defs>
    <rect x="1267" y="1320" width="104" height="150" fill="url(#pipe)" stroke="#22232f" strokeWidth="2" />
    <g stroke="#1b1b20" strokeWidth="2" strokeLinejoin="round">
      <path d="M903 1040V1102A416 240 0 0 0 1319 1342A416 240 0 0 0 1685 1216V1153z" fill="url(#rim)" />
      <path d="M903 1102A416 240 0 0 0 1319 1342A416 240 0 0 0 1685 1217" fill="none" strokeWidth="4" />
      <path d="M821 965V1024Q822 1040 841 1050L903 1077V1017L841 986z" fill="#454546" />
      <path d="M841 986v64" />
      <path d="M821 1024Q822 1040 841 1050L903 1077" fill="none" strokeWidth="3" />
      <path d="M1684 1155V1217L1776 1213Q1816 1206 1816 1183V1118L1768 1150z" fill="url(#lug)" />
      <path d="M1690 1154v63M1768 1150v63" fill="none" />
      <path d="M1686 1217L1776 1213Q1814 1206 1816 1183" fill="none" strokeWidth="3" />
      <path
        d="M952 927A416 240 0 0 1 1319 801A416 240 0 0 1 1734 1041Q1735 1052 1733 1063L1798 1092Q1816 1101 1816 1118Q1812 1147 1768 1150L1688 1154L1684 1155A416 240 0 0 1 1319 1281A416 240 0 0 1 903 1041L904 1018L841 986Q821 978 821 962Q822 934 891 930z"
        fill="url(#face)"
      />
      <ellipse cx="866" cy="1026" rx="14" ry="8" fill="#4e4e4f" strokeWidth="3" />
      <ellipse cx="1768" cy="1122" rx="16" ry="10" fill="#2f2f31" strokeWidth="3" />
      <ellipse cx="1319" cy="1075" rx="50" ry="29" fill="none" strokeWidth="3" />
      <ellipse cx="1319" cy="1106" rx="54" ry="32" fill="none" strokeWidth="3" strokeDasharray="9 7" />
    </g>
    <g stroke="#23243a" strokeWidth="2">
      <path d="M842 612V966A24 12 0 0 0 890 966V612z" fill="url(#pipe)" />
      <path d="M843 612V966A23 11 0 0 0 889 966V612z" fill="url(#pipeFoot)" stroke="none" />
      <ellipse cx="866" cy="612" rx="24" ry="12" fill="#b5b6c6" />
      <ellipse cx="866" cy="965" rx="17" ry="10" fill="#9d9eac" strokeWidth="3" />
      <path d="M852 533V611A14 7 0 0 0 880 611V533z" fill="#8e8f9e" />
      <path d="M852 533V559A14 7 0 0 0 880 559V533z" fill="#454557" />
      <ellipse cx="866" cy="532" rx="12" ry="6" fill="#c2c3d0" strokeWidth="4" />
    </g>
    <g strokeWidth="7" fontFamily="DejaVu Sans Condensed" fontSize="22" textAnchor="middle">
      <path d="M459 1350v-36" stroke="#1f6a22" /><path d="M459 1303l10 17-10 5-10-5z" fill="#2a8a33" />
      <path d="M459 1350l28 17" stroke="#c2191c" /><path d="M503 1377l-19-1 9-16z" fill="#dc2a2a" />
      <path d="M459 1350l-28 17" stroke="#2222a8" /><path d="M416 1377l19-1-9-16z" fill="#3030c8" />
      <text x="458" y="1300" fill="#2a8a33">Y</text>
      <text x="507" y="1387" fill="#dc2a2a">X</text>
      <text x="409" y="1387" fill="#3030c8">Z</text>
    </g>
    <text x="400" y="1457" fontFamily="DejaVu Sans Condensed" fontWeight="700" fontSize="24" fill="#2e2a62">*Isometric</text>
  </Scene>
);

export default function App() {
  return (
    <Shell>
      <GlobalStyle />
      <TitleBar>
        <Brand>
          <LogoCube />
          <BrandName><b>SOLID</b>WORKS</BrandName>
        </Brand>
        <BrandEdge />
        <MenuBar>
          {menus.map((m) => <MenuItem key={m}>{m}</MenuItem>)}
          <MenuItem aria-label="Pin menu"><Pic name="pin" size={28} /></MenuItem>
        </MenuBar>
        <QuickBar>
          {quickTools.map(([icon, label]) => (
            <Split key={icon}>
              <IconButton aria-label={label}><Pic name={icon} /></IconButton>
              <CaretButton aria-label={`${label} options`}><Down /></CaretButton>
            </Split>
          ))}
          <SelectTool>
            <SelectMain aria-label="Select"><Pic name="arrow" /></SelectMain>
            <SelectMore aria-label="Select options"><Down /></SelectMore>
          </SelectTool>
          <IconButton aria-label="Rebuild"><Pic name="traffic" /></IconButton>
          <IconButton aria-label="File properties"><Pic name="sheet" /></IconButton>
          <Split>
            <IconButton aria-label="Options"><Pic name="options" /></IconButton>
            <CaretButton aria-label="More options"><Down /></CaretButton>
          </Split>
          <DocName>Ensamblaje *</DocName>
          <Split>
            <IconButton aria-label="Help"><Pic name="help" size={26} /></IconButton>
            <CaretButton aria-label="Help options"><Down /></CaretButton>
          </Split>
          {windowTools.map(([icon, label]) => (
            <IconButton key={icon} aria-label={label}><Pic name={icon} /></IconButton>
          ))}
        </QuickBar>
      </TitleBar>

      <Ribbon>
        {commands.map((c) => (
          <React.Fragment key={c.text}>
            <Command $w={c.w} $drop={c.drop} $off={c.off} $on={c.on} disabled={c.off}>
              <Pic name={c.icon} />
              <CommandText>{c.text}</CommandText>
              {c.drop && <CommandCaret><Down /></CommandCaret>}
            </Command>
            {c.rule !== undefined && <Divider $gap={c.rule} />}
          </React.Fragment>
        ))}
        <Watermark viewBox="1900 62 140 140" aria-hidden="true">
          <path d="M1942 68Q2004 60 1996 84Q1986 104 1950 120" />
          <path d="M1911 134Q1976 124 1966 150Q1950 182 1904 194L1928 150" />
          <path d="M2034 115Q1984 110 1988 130Q1996 146 2018 162Q2030 186 1970 182" />
        </Watermark>
      </Ribbon>

      <ToolRow>
        <TabStrip>
          {commandTabs.map(([t, w], i) => <CommandTab key={t} $w={w} $active={i === 0}>{t}</CommandTab>)}
        </TabStrip>
        <ViewTools>
          {viewTools.map(([icon, label, drop]) => (
            <ViewTool key={icon}>
              <IconButton aria-label={label}><Pic name={icon} /></IconButton>
              {drop && <CaretButton aria-label={`${label} options`}><Down /></CaretButton>}
            </ViewTool>
          ))}
        </ViewTools>
        <DocControls>
          {[["paneLeft", "Tile left"], ["paneRight", "Tile right"], ...windowTools].map(([icon, label]) => (
            <IconButton key={icon} aria-label={`${label} document`}><Pic name={icon} /></IconButton>
          ))}
        </DocControls>
      </ToolRow>

      <Body>
        <Panel>
          <PanelTabs>
            <PanelTab $active aria-label="Feature tree"><Pic name="asm" /></PanelTab>
            <PanelTab aria-label="Properties"><Pic name="props" /></PanelTab>
            <PanelTab aria-label="Configurations"><Pic name="config" /></PanelTab>
            <PanelTab aria-label="Appearances"><Pic name="appearance" /></PanelTab>
            <MoreButton aria-label="More tabs">
              <Art viewBox="0 0 20 20" $size={20}>
                <path d="M2 3l7 7-7 7M11 3l7 7-7 7" fill="none" stroke="#5c5e72" strokeWidth="2" />
              </Art>
            </MoreButton>
          </PanelTabs>
          <FilterBox>
            <Pic name="funnel" size={24} />
            <Down />
            <FilterInput aria-label="Filter tree" />
          </FilterBox>
          <Tree>
            {nodes.map((n, i) => <TreeItem key={i} node={n} />)}
          </Tree>
          <HScroll>
            <Art viewBox="0 0 12 12" $size={12}><path d="M10 0v12L3 6z" fill="#33343c" /></Art>
            <ScrollTrack><ScrollThumb><i /><i /><i /></ScrollThumb></ScrollTrack>
            <Art viewBox="0 0 12 12" $size={12}><path d="M2 0v12l7-6z" fill="#33343c" /></Art>
          </HScroll>
          <PanelFoot />
        </Panel>

        <Viewport>
          <Model />
          <SplitHandle aria-label="Collapse panel">
            <HandleArt viewBox="0 0 14 51">
              <path d="M11 6v9L4 10zM11 22v9l-7-5zM11 38v9l-7-5z" fill="#5c5e78" />
            </HandleArt>
          </SplitHandle>
          <TaskPane>
            {["home", "library", "folder", "palette", "ball", "sheet"].map((n, i) => (
              <TaskTab key={n} $active={i === 0} aria-label={`Task pane ${n}`}><Pic name={n} size={30} /></TaskTab>
            ))}
          </TaskPane>
        </Viewport>
      </Body>

      <SheetBar>
        <SheetNav>
          {["M3 1v14M14 1v14L6 8z", "M12 1v14L4 8z", "M4 1v14l8-7z", "M13 1v14M2 1v14l8-7z"].map((d, i) => (
            <NavButton key={d} aria-label={["First", "Previous", "Next", "Last"][i]}>
              <Art viewBox="0 0 16 16" $size={16}><path d={d} fill="#85879b" stroke="#85879b" strokeWidth="2" /></Art>
            </NavButton>
          ))}
        </SheetNav>
        <Sheet $w={110} $active>Model</Sheet>
        <Sheet $w={205}>Motion Study 1</Sheet>
      </SheetBar>

      <StatusBar>
        <StatusCell $grow>SolidWorks Student Edition - Academic Use Only</StatusCell>
        <StatusCell $w={188}>Under Defined</StatusCell>
        <StatusCell $w={270}>Editing Assembly</StatusCell>
        <StatusCell $w={89}>MMGS</StatusCell>
        <StatusCell $w={44}>
          <Caret viewBox="0 0 12 8"><path d="M0 7h12L6 0z" /></Caret>
        </StatusCell>
        <StatusCell $w={128}>
          <Art viewBox="0 0 26 26" $size={26}>
            <path d="M1 1h24v24H1z" fill="#f4faf8" stroke="#44506a" strokeWidth="2" />
            <text x="13" y="21" textAnchor="middle" fontFamily="Liberation Sans" fontWeight="700" fontSize="22" fill="#1fa12b">?</text>
          </Art>
        </StatusCell>
        <Art viewBox="0 0 30 30" $size={30} aria-hidden="true">
          <path d="M1 16L16 3l9-2 4 5-1 9-14 14-9-3z" fill="#f3c93a" stroke="#8a6210" strokeWidth="2" strokeLinejoin="round" />
          <circle cx="23" cy="7" r="3" fill="#fff" stroke="#8a6210" strokeWidth="1.6" />
          <path d="M8 16l8 7M12 12l8 7" stroke="#a67a18" strokeWidth="1.6" />
        </Art>
      </StatusBar>
    </Shell>
  );
}
